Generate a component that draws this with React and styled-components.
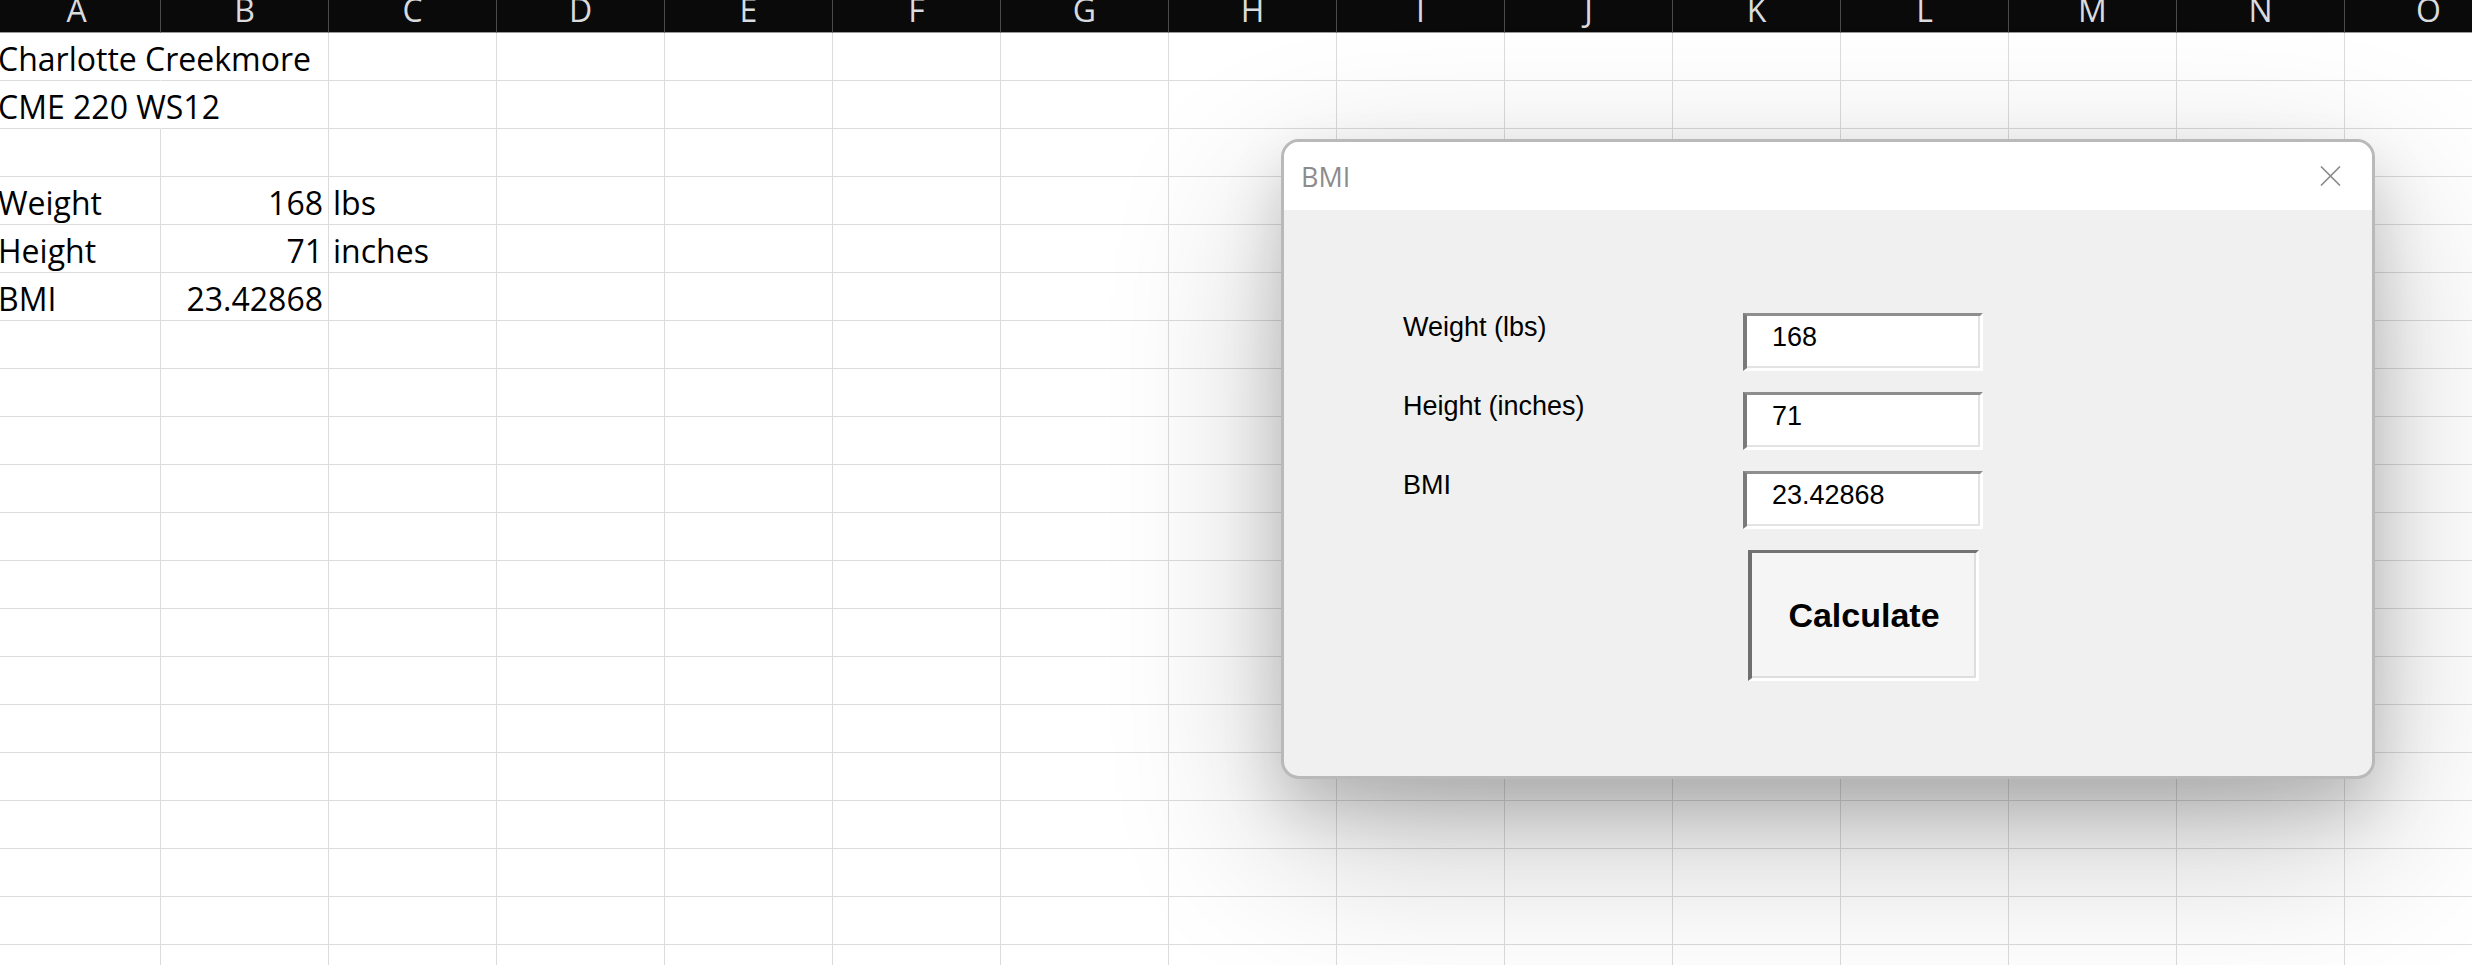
import React from 'react';
import styled, { createGlobalStyle } from 'styled-components';

const Global = createGlobalStyle`
  html, body { margin: 0; padding: 0; background: #fff; }
  body { overflow: hidden; }
`;

const Screen = styled.div`
  position: relative;
  width: 2472px;
  height: 965px;
  overflow: hidden;
  background: #fff;
`;

const Sheet = styled.div`
  display: grid;
  grid-template-columns: repeat(15, 168px);
  grid-template-rows: 33px;
  grid-auto-rows: 48px;
  margin-left: -7px;
  width: max-content;
  font-family: "Open Sans", "Noto Sans", sans-serif;
`;

const HeaderCell = styled.div`
  box-sizing: border-box;
  background: #0a0a0a;
  color: #d9dbde;
  font-size: 32px;
  line-height: 19px;
  display: flex;
  justify-content: center;
  border-right: 1px solid #4a4a4a;
  border-bottom: 1px solid #9b9b9b;
`;

const Cell = styled.div`
  box-sizing: border-box;
  display: flex;
  align-items: flex-end;
  justify-content: ${(p) => (p.$num ? 'flex-end' : 'flex-start')};
  padding: 0 5px 0 ${(p) => (p.$first ? 5 : 4)}px;
  border-right: 1px solid ${(p) => (p.$open ? 'transparent' : '#dcdcdc')};
  border-bottom: 1px solid #dcdcdc;
  font-size: 32px;
  color: #000;
  white-space: nowrap;
  overflow: visible;
`;

const Dialog = styled.div`
  position: absolute;
  left: 1281px;
  top: 139px;
  width: 1094px;
  height: 640px;
  box-sizing: border-box;
  border: 3px solid #b9b9b9;
  border-radius: 18px;
  overflow: hidden;
  background: #f0f0f0;
  box-shadow: 0 30px 60px rgba(0, 0, 0, 0.16), 0 60px 170px rgba(0, 0, 0, 0.24);
  display: flex;
  flex-direction: column;
  font-family: "Liberation Sans", Arial, sans-serif;
`;

const TitleBar = styled.div`
  height: 68px;
  flex: none;
  background: #fff;
  display: flex;
  align-items: center;
  justify-content: space-between;
  padding: 0 31px 0 17px;
`;

const Title = styled.span`
  font-family: "Open Sans", "Noto Sans", sans-serif;
  font-size: 27px;
  color: #8c8c8c;
`;

const Body = styled.div`
  flex: 1;
  display: grid;
  grid-template-columns: 340px 240px;
  row-gap: 21px;
  align-content: start;
  padding: 103px 0 0 119px;
`;

const Label = styled.div`
  font-size: 27px;
  line-height: 27px;
  padding-top: 1px;
  color: #000;
`;

const TextBox = styled.div`
  box-sizing: border-box;
  height: 58px;
  background: #fff;
  border-style: solid;
  border-width: 3px 3px 3px 4px;
  border-color: #8e8e8e #fff #fff #7a7a7a;
  box-shadow: inset -2px -2px 0 #e3e3e3;
  font-size: 27px;
  line-height: 27px;
  padding: 8px 0 0 25px;
  color: #000;
`;

const Button = styled.button`
  grid-column: 2;
  box-sizing: border-box;
  margin-left: 5px;
  width: 231px;
  height: 131px;
  padding: 0;
  border-style: solid;
  border-width: 3px 3px 3px 4px;
  border-color: #737373 #fff #fff #6f6f6f;
  box-shadow: inset -2px -2px 0 #dedede;
  background: #f5f5f5;
  font-family: "Liberation Sans", Arial, sans-serif;
  font-weight: 700;
  font-size: 34px;
  color: #000;
  display: flex;
  align-items: center;
  justify-content: center;
`;

const CloseIcon = () => (
  <svg width="21" height="20" viewBox="0 0 21 20">
    <path d="M1 0.5 L20 19.5 M20 0.5 L1 19.5" stroke="#8a8a8a" strokeWidth="1.6" fill="none" />
  </svg>
);

const COLS = 'ABCDEFGHIJKLMNO'.split('');
const DATA = {
  0: [{ t: 'Charlotte Creekmore', open: true }],
  1: [{ t: 'CME 220 WS12', open: true }],
  3: [{ t: 'Weight' }, { t: '168', num: true }, { t: 'lbs' }],
  4: [{ t: 'Height' }, { t: '71', num: true }, { t: 'inches' }],
  5: [{ t: 'BMI' }, { t: '23.42868', num: true }],
};

export default function App() {
  const rows = Array.from({ length: 20 }, (_, r) => r);
  return (
    <Screen>
      <Global />
      <Sheet>
        {COLS.map((c) => (
          <HeaderCell key={c}>{c}</HeaderCell>
        ))}
        {rows.map((r) =>
          COLS.map((c, ci) => {
            const d = (DATA[r] || [])[ci];
            return (
              <Cell
                key={`${r}-${c}`}
                $first={ci === 0}
                $num={d && d.num}
                $open={d && d.open}
              >
                {d ? d.t : ''}
              </Cell>
            );
          })
        )}
      </Sheet>
      <Dialog>
        <TitleBar>
          <Title>BMI</Title>
          <CloseIcon />
        </TitleBar>
        <Body>
          <Label>Weight (lbs)</Label>
          <TextBox>168</TextBox>
          <Label>Height (inches)</Label>
          <TextBox>71</TextBox>
          <Label>BMI</Label>
          <TextBox>23.42868</TextBox>
          <Button>Calculate</Button>
        </Body>
      </Dialog>
    </Screen>
  );
}
